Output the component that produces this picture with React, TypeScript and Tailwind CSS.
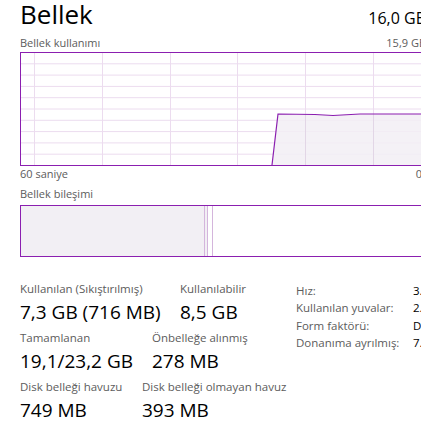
import React from 'react';

const PURPLE = '#8b1fb0';
const GRID = '#ecdcef';
const FILL = '#f2eff4';

const GRID_COLS = [14, 82, 150, 217, 285, 353];
const GRID_ROWS = [1, 2, 3, 4, 5, 6, 7, 8, 9];

function UsageChart() {
  const w = 405;
  const h = 113;
  const line = 'M252,113 L258,62 L295,62.5 L313,63.5 L340,62 L405,62';
  return (
    <svg width={w + 1} height={h + 1} className="block">
      {GRID_ROWS.map((r) => (
        <line key={r} x1={0} x2={w} y1={r * 11.3 + 0.5} y2={r * 11.3 + 0.5} stroke={GRID} strokeWidth={1} />
      ))}
      {GRID_COLS.map((c) => (
        <line key={c} x1={c + 0.5} x2={c + 0.5} y1={0} y2={h} stroke={GRID} strokeWidth={1} />
      ))}
      <path d={line + ' L405,113 Z'} fill={FILL} fillOpacity={0.85} />
      {GRID_COLS.filter((c) => c > 255).map((c) => (
        <line key={'d' + c} x1={c + 0.5} x2={c + 0.5} y1={62} y2={h} stroke="#e2d6e6" strokeWidth={1} />
      ))}
      <path d={line} fill="none" stroke={PURPLE} strokeWidth={1.2} />
      <rect x={0.5} y={0.5} width={w} height={h} fill="none" stroke={PURPLE} strokeWidth={1} />
    </svg>
  );
}

function Stat({ label, value, width }: { label: string; value: string; width: string }) {
  return (
    <div className={width}>
      <div className="text-[11.5px] leading-[16px] text-[#5c5c5c] whitespace-nowrap">{label}</div>
      <div className="text-[19px] leading-[24px] text-black whitespace-nowrap mt-[3px]">{value}</div>
    </div>
  );
}

const SPECS = [
  ['Hız:', '3.'],
  ['Kullanılan yuvalar:', '2.'],
  ['Form faktörü:', 'D'],
  ['Donanıma ayrılmış:', '7.'],
];

export default function App() {
  return (
    <div
      className="w-[421px] h-[432px] overflow-hidden bg-white"
      style={{ fontFamily: '"Open Sans", "Noto Sans", sans-serif' }}
    >
      <div className="w-[406px] ml-[20px]">
        <div className="flex items-baseline justify-between h-[28px]">
          <span className="text-[26px] leading-[28px] text-black">Bellek</span>
          <span className="text-[16px] leading-[28px] text-black">16,0 GB</span>
        </div>
        <div className="flex justify-between mt-[7px] text-[11px] leading-[16px] text-[#5c5c5c]">
          <span>Bellek kullanımı</span>
          <span>15,9 GB</span>
        </div>
        <div className="mt-[1px]">
          <UsageChart />
        </div>
        <div className="flex justify-between text-[11px] leading-[16px] text-[#5c5c5c]">
          <span>60 saniye</span>
          <span className="mr-[4px]">0</span>
        </div>
        <div className="mt-[4px] text-[11px] leading-[16px] text-[#5c5c5c]">Bellek bileşimi</div>
        <div className="mt-[3px] h-[52px] border border-[#8b1fb0] flex">
          <div className="w-[183px] bg-[#f2eff4]" />
          <div className="w-[1px] bg-[#d4b5dc]" />
          <div className="w-[2px] bg-[#f2eff4]" />
          <div className="w-[1px] bg-[#d4b5dc]" />
          <div className="w-[4px] bg-white" />
          <div className="w-[1px] bg-[#d4b5dc]" />
          <div className="flex-1 bg-white" />
        </div>

        <div className="flex mt-[24px]">
          <div className="w-[276px] shrink-0 flex flex-col gap-[6px]">
            <div className="flex">
              <Stat label="Kullanılan (Sıkıştırılmış)" value="7,3 GB (716 MB)" width="w-[160px]" />
              <Stat label="Kullanılabilir" value="8,5 GB" width="w-[100px]" />
            </div>
            <div className="flex">
              <Stat label="Tamamlanan" value="19,1/23,2 GB" width="w-[132px]" />
              <Stat label="Önbelleğe alınmış" value="278 MB" width="w-[120px]" />
            </div>
            <div className="flex">
              <Stat label="Disk belleği havuzu" value="749 MB" width="w-[122px]" />
              <Stat label="Disk belleği olmayan havuz" value="393 MB" width="w-[150px]" />
            </div>
          </div>
          <div className="shrink-0 w-[140px] flex flex-col mt-[1px]">
            {SPECS.map(([k, v]) => (
              <div key={k} className="flex text-[11.5px] leading-[17.3px]">
                <span className="w-[117px] shrink-0 text-[#5c5c5c] whitespace-nowrap">{k}</span>
                <span className="text-black">{v}</span>
              </div>
            ))}
          </div>
        </div>
      </div>
    </div>
  );
}
